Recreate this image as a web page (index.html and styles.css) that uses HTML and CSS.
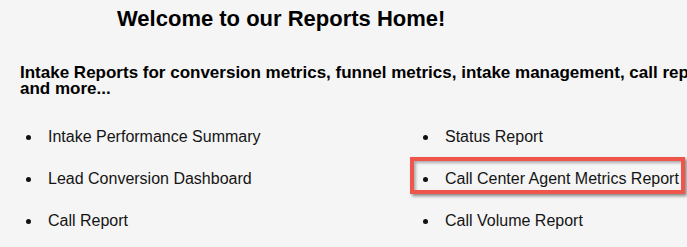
FILE: index.html
```html
<!DOCTYPE html>
<html lang="en">
<head>
<meta charset="utf-8">
<title>Reports Home</title>
<link rel="stylesheet" href="styles.css">
</head>
<body>
<main class="page">
  <h1 class="title">Welcome to our Reports Home!</h1>
  <h2 class="subtitle">Intake Reports for conversion metrics, funnel metrics, intake management, call reports, and more...</h2>
  <ul class="reports">
    <li class="report"><span class="dot"></span>Intake Performance Summary</li>
    <li class="report"><span class="dot"></span>Lead Conversion Dashboard</li>
    <li class="report"><span class="dot"></span>Call Report</li>
    <li class="report"><span class="dot"></span>Status Report</li>
    <li class="report"><span class="dot"></span>Call Center Agent Metrics Report<span class="highlight"></span></li>
    <li class="report"><span class="dot"></span>Call Volume Report</li>
  </ul>
</main>
</body>
</html>
```

FILE: styles.css
```css
html, body {
  margin: 0;
  padding: 0;
  overflow: hidden;
  background: #f5f5f5;
}

.page {
  width: 687px;
  height: 247px;
  padding-top: 6px;
  box-sizing: border-box;
  font-family: "Liberation Sans", Arial, sans-serif;
  color: #111;
}

.title {
  margin: 0 0 0 117px;
  font-size: 22px;
  line-height: 26px;
  font-weight: bold;
  color: #000;
  white-space: nowrap;
}

.subtitle {
  margin: 33px 0 0 20px;
  width: 722px;
  font-size: 17px;
  line-height: 16px;
  font-weight: bold;
  color: #000;
}

.reports {
  list-style: none;
  margin: 30px 0 0 0;
  padding: 0 0 0 26px;
  display: grid;
  grid-template-columns: 397px auto;
  grid-template-rows: repeat(3, 20px);
  grid-auto-flow: column;
  row-gap: 22px;
}

.report {
  position: relative;
  display: flex;
  align-items: baseline;
  font-size: 16px;
  line-height: 20px;
  color: #141414;
  white-space: nowrap;
}

.dot {
  flex: none;
  width: 5px;
  height: 5px;
  border-radius: 50%;
  background: #111;
  margin-right: 17px;
  align-self: center;
  position: relative;
  top: 0px;
}

.highlight {
  position: absolute;
  left: -13px;
  top: -12.5px;
  width: 275px;
  height: 37px;
  box-sizing: border-box;
  border: 4px solid #f0554b;
  box-shadow: 2px 2px 3px rgba(0, 0, 0, 0.45), inset 2px 2px 3px rgba(0, 0, 0, 0.3);
  pointer-events: none;
}
```
